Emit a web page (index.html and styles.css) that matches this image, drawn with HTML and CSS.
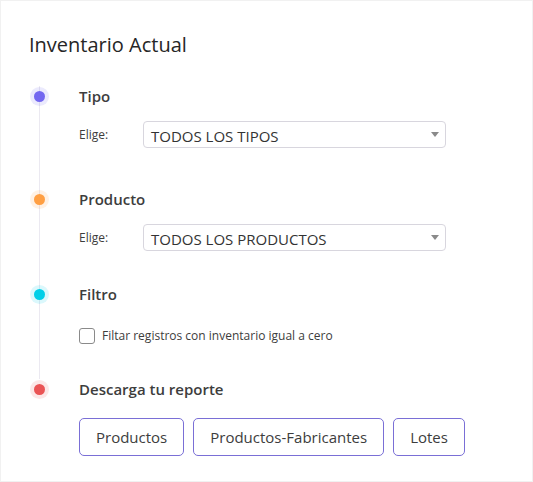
FILE: index.html
```html
<!DOCTYPE html>
<html lang="es">
<head>
<meta charset="utf-8">
<title>Inventario Actual</title>
<link rel="stylesheet" href="styles.css">
</head>
<body>
<div class="card">
  <h2 class="card-title">Inventario Actual</h2>
  <ul class="timeline">
    <li class="step step-tipo">
      <span class="dot dot-primary"></span>
      <h3 class="step-title">Tipo</h3>
      <div class="field">
        <label class="field-label">Elige:</label>
        <div class="select"><span class="select-text">TODOS LOS TIPOS</span><span class="caret"></span></div>
      </div>
    </li>
    <li class="step step-producto">
      <span class="dot dot-warning"></span>
      <h3 class="step-title">Producto</h3>
      <div class="field">
        <label class="field-label">Elige:</label>
        <div class="select"><span class="select-text">TODOS LOS PRODUCTOS</span><span class="caret"></span></div>
      </div>
    </li>
    <li class="step step-filtro">
      <span class="dot dot-info"></span>
      <h3 class="step-title">Filtro</h3>
      <label class="check-row"><span class="checkbox"></span>Filtar registros con inventario igual a cero</label>
    </li>
    <li class="step step-descarga">
      <span class="dot dot-danger"></span>
      <h3 class="step-title">Descarga tu reporte</h3>
      <div class="buttons">
        <button class="btn">Productos</button>
        <button class="btn">Productos-Fabricantes</button>
        <button class="btn">Lotes</button>
      </div>
    </li>
  </ul>
</div>
</body>
</html>
```
FILE: styles.css
```css
* { box-sizing: border-box; }
html, body { margin: 0; padding: 0; background: #fff; }
body { font-family: "Open Sans", "Noto Sans", sans-serif; color: #3a3a3a; }

.card {
  width: 533px;
  height: 482px;
  border: 1px solid #f1f1f1;
  padding: 30px 0 0 27px;
}

.card-title {
  margin: 0 0 0 1px;
  font-size: 20px;
  line-height: 28px;
  font-weight: 500;
  color: #262626;
}

.timeline {
  list-style: none;
  margin: 27px 0 0 11px;
  padding: 0;
}

.step {
  position: relative;
  border-left: 1px solid #ebe9f1;
  padding-left: 39px;
}
.step-tipo { padding-bottom: 41px; }
.step-producto { padding-bottom: 33px; }
.step-filtro { padding-bottom: 34px; }
.step-descarga { border-left-color: transparent; }

.dot {
  position: absolute;
  left: -6px;
  top: 5px;
  width: 11px;
  height: 11px;
  border-radius: 50%;
}
.dot-primary { background: #7367f0; box-shadow: 0 0 0 4px rgba(115, 103, 240, 0.14); }
.dot-warning { background: #ff9f43; box-shadow: 0 0 0 4px rgba(255, 159, 67, 0.14); }
.dot-info { background: #00cfe8; box-shadow: 0 0 0 4px rgba(0, 207, 232, 0.14); }
.dot-danger { background: #ea5455; box-shadow: 0 0 0 4px rgba(234, 84, 85, 0.14); }

.step-title {
  margin: 0;
  font-size: 15px;
  line-height: 20px;
  font-weight: 600;
  color: #3d3d3d;
}

.field {
  display: flex;
  align-items: center;
  margin-top: 15px;
}
.field-label {
  flex: 0 0 64px;
  font-size: 12px;
  color: #3d3d3d;
}
.select {
  width: 303px;
  height: 27px;
  border: 1px solid #d8d6de;
  border-radius: 4px;
  padding: 0 6px 0 7px;
  display: flex;
  justify-content: space-between;
  align-items: center;
}
.select-text {
  font-size: 15px;
  line-height: 20px;
  margin-top: 3px;
  color: #333;
}
.caret {
  width: 0;
  height: 0;
  border-left: 4px solid transparent;
  border-right: 4px solid transparent;
  border-top: 5px solid #8a8a8a;
}

.check-row {
  display: flex;
  align-items: center;
  gap: 7px;
  margin-top: 23px;
  font-size: 12px;
  line-height: 18px;
  color: #3d3d3d;
}
.checkbox {
  width: 16px;
  height: 16px;
  border: 1px solid #8a8a8a;
  border-radius: 3px;
  background: #fff;
}

.buttons {
  display: flex;
  gap: 9px;
  margin-top: 19px;
}
.btn {
  height: 38px;
  padding: 0 16px;
  border: 1px solid #7a6fd6;
  border-radius: 5px;
  background: #fff;
  font-family: "Open Sans", "Noto Sans", sans-serif;
  font-size: 15px;
  color: #3d3d3d;
}
```
